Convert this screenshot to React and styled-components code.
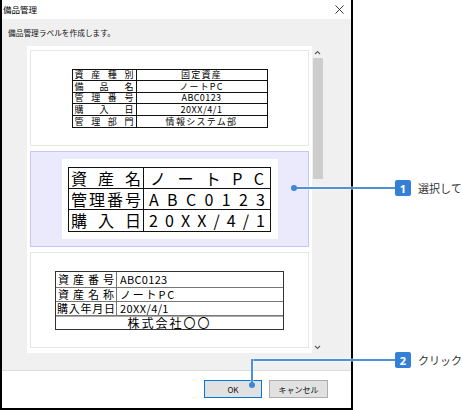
import React from 'react';
import styled, { createGlobalStyle } from 'styled-components';

const GlobalStyle = createGlobalStyle`
  html, body { margin: 0; padding: 0; background: #fff; }
  body { font-family: "Noto Sans CJK JP", "Noto Sans", sans-serif; color: #000; }
  * { box-sizing: border-box; }
`;

const Stage = styled.div`
  position: relative;
  width: 462px;
  height: 410px;
  overflow: hidden;
  background: #fff;
`;

const Window = styled.div`
  width: 353px;
  height: 410px;
  border: 2px solid #000;
  border-top: none;
  display: flex;
  flex-direction: column;
  background: #fff;
`;

const TitleBar = styled.div`
  flex: none;
  height: 19px;
  display: flex;
  align-items: center;
  justify-content: space-between;
  padding: 0 7px 0 1px;
  font-size: 8.5px;
  line-height: 1;
  background: #fff;
`;

const Body = styled.div`
  flex: 1;
  background: #f0f0f0;
  padding: 9px 0 0 25px;
  display: flex;
  flex-direction: column;
`;

const Description = styled.div`
  font-size: 7.7px;
  line-height: 10px;
  height: 10px;
  margin: 0 0 8px -19px;
  color: #111;
`;

const ListRow = styled.div`
  display: flex;
  height: 307px;
`;

const ListArea = styled.div`
  width: 285px;
  background: #fff;
  padding: 4px 3px 5px;
  display: flex;
  flex-direction: column;
  gap: 5px;
`;

const Card = styled.div`
  height: 96px;
  border: 1px solid ${p => (p.$selected ? '#c6c6f4' : '#e6e6e6')};
  background: ${p => (p.$selected ? '#eaeafc' : '#fff')};
  display: flex;
  align-items: center;
  justify-content: center;
`;

const Scrollbar = styled.div`
  width: 11px;
  display: flex;
  flex-direction: column;
  align-items: center;
`;

const ArrowBox = styled.div`
  height: 12px;
  width: 11px;
  display: flex;
  align-items: center;
  justify-content: center;
`;

const Thumb = styled.div`
  width: 10px;
  margin-left: 1px;
  height: 121px;
  background: #cdcdcd;
`;

const Track = styled.div`
  flex: 1;
`;

const Footer = styled.div`
  flex: none;
  height: 38px;
  border-top: 1px solid #dcdcdc;
  background: #fff;
  display: flex;
  justify-content: flex-end;
  align-items: flex-start;
  gap: 7px;
  padding: 9px 23px 0 0;
`;

const Button = styled.div`
  width: ${p => p.$w}px;
  height: 18px;
  background: #e1e1e1;
  border: 1px solid ${p => (p.$default ? '#0078d7' : '#adadad')};
  font-size: 8px;
  display: flex;
  align-items: center;
  justify-content: center;
  color: #111;
`;

/* label tables */
const Grid = styled.div`
  display: grid;
  width: ${p => p.$w}px;
  height: ${p => p.$h}px;
  grid-template-columns: ${p => p.$cols};
  grid-template-rows: ${p => p.$rows};
  gap: 1px;
  background: ${p => p.$line};
  border: ${p => p.$outer};
  font-size: ${p => p.$fs}px;
  line-height: 1;
`;

const Cell = styled.div`
  background: #fff;
  display: flex;
  align-items: center;
  justify-content: ${p => p.$align || 'center'};
  padding: 0 ${p => p.$pad ?? 2}px;
  letter-spacing: ${p => p.$ls || 0}px;
  white-space: nowrap;
  min-height: 0;
  ${p => p.$span && 'grid-column: 1 / span 2;'}
  ${p => p.$topRule && `border-top: 1px solid ${p.$topRule};`}
  ${p => p.$big && `font-size: ${p.$big}px;`}
`;

const Spread = styled.span`
  display: flex;
  width: 100%;
  justify-content: space-between;
  align-items: center;
  line-height: 1;
`;

const Sheet = styled.div`
  width: 216px;
  height: 80px;
  background: #fff;
  display: flex;
  align-items: center;
  justify-content: center;
`;

const spread = chars => (
  <Spread>
    {chars.map((c, i) => (
      <span key={i}>{c}</span>
    ))}
  </Spread>
);

/* callouts */
const Leader = styled.div`
  position: absolute;
  left: ${p => p.$x}px;
  top: ${p => p.$y}px;
  width: ${p => p.$w}px;
  height: ${p => p.$h}px;
  background: #4f91d8;
  box-shadow: 0 0 0 0.5px rgba(255, 255, 255, 0.6);
`;

const Dot = styled.div`
  position: absolute;
  left: ${p => p.$x - 3}px;
  top: ${p => p.$y - 3}px;
  width: 6px;
  height: 6px;
  border-radius: 50%;
  background: #3f87d6;
`;

const Tag = styled.div`
  position: absolute;
  left: 395px;
  top: ${p => p.$cy - 8}px;
  display: flex;
  align-items: center;
  gap: 7px;
`;

const Badge = styled.div`
  width: 16px;
  height: 16px;
  border-radius: 2px;
  background: #3480d6;
  color: #fff;
  font-family: "Noto Sans", sans-serif;
  font-weight: 700;
  font-size: 11px;
  display: flex;
  align-items: center;
  justify-content: center;
`;

const TagText = styled.span`
  font-size: 11px;
  color: #333;
  white-space: nowrap;
`;

const Chevron = ({ up }) => (
  <svg width="7" height="5" viewBox="0 0 7 5">
    <path
      d={up ? 'M1 4 L3.5 1.5 L6 4' : 'M1 1 L3.5 3.5 L6 1'}
      fill="none"
      stroke="#606060"
      strokeWidth="1.2"
    />
  </svg>
);

const CloseIcon = () => (
  <svg width="9" height="9" viewBox="0 0 9 9">
    <path d="M0.5 0.5 L8.5 8.5 M8.5 0.5 L0.5 8.5" stroke="#222" strokeWidth="0.9" />
  </svg>
);

export default function App() {
  return (
    <>
      <GlobalStyle />
      <Stage>
        <Window>
          <TitleBar>
            <span>備品管理</span>
            <CloseIcon />
          </TitleBar>
          <Body>
            <Description>備品管理ラベルを作成します。</Description>
            <ListRow>
              <ListArea>
                <Card>
                  <Grid
                    $w={196}
                    $h={59}
                    $cols="63px 1fr"
                    $rows="repeat(5, 1fr)"
                    $line="#111"
                    $outer="1px solid #111"
                    $fs={9}
                  >
                    <Cell>{spread(['資', '産', '種', '別'])}</Cell>
                    <Cell $ls={1.2}>固定資産</Cell>
                    <Cell>{spread(['備', '品', '名'])}</Cell>
                    <Cell $ls={1.2}>ノートPC</Cell>
                    <Cell>{spread(['管', '理', '番', '号'])}</Cell>
                    <Cell $ls={0.4}>ABC0123</Cell>
                    <Cell>{spread(['購', '入', '日'])}</Cell>
                    <Cell $ls={0.6}>20XX/4/1</Cell>
                    <Cell>{spread(['管', '理', '部', '門'])}</Cell>
                    <Cell $ls={1.3}>情報システム部</Cell>
                  </Grid>
                </Card>
                <Card $selected>
                  <Sheet>
                    <Grid
                      $w={203}
                      $h={65}
                      $cols="74px 1fr"
                      $rows="repeat(3, 1fr)"
                      $line="#111"
                      $outer="1.5px solid #111"
                      $fs={16}
                    >
                      <Cell $pad={2}>{spread(['資', '産', '名'])}</Cell>
                      <Cell $pad={6}>{spread(['ノ', 'ー', 'ト', 'P', 'C'])}</Cell>
                      <Cell $pad={2}>{spread(['管', '理', '番', '号'])}</Cell>
                      <Cell $pad={5}>{spread(['A', 'B', 'C', '0', '1', '2', '3'])}</Cell>
                      <Cell $pad={2}>{spread(['購', '入', '日'])}</Cell>
                      <Cell $pad={5}>{spread(['2', '0', 'X', 'X', '/', '4', '/', '1'])}</Cell>
                    </Grid>
                  </Sheet>
                </Card>
                <Card>
                  <Grid
                    $w={229}
                    $h={59}
                    $cols="60px 1fr"
                    $rows="15px 13px 13px 1fr"
                    $line="#777"
                    $outer="1.5px solid #333"
                    $fs={11}
                  >
                    <Cell>{spread(['資', '産', '番', '号'])}</Cell>
                    <Cell $align="flex-start" $pad={3} $ls={0.3}>ABC0123</Cell>
                    <Cell>{spread(['資', '産', '名', '称'])}</Cell>
                    <Cell $align="flex-start" $pad={3} $ls={1.8}>ノートPC</Cell>
                    <Cell $pad={1}>{spread(['購', '入', '年', '月', '日'])}</Cell>
                    <Cell $align="flex-start" $pad={3} $ls={0.4}>20XX/4/1</Cell>
                    <Cell $span $topRule="#aaa" $big={12} $ls={2}>株式会社〇〇</Cell>
                  </Grid>
                </Card>
              </ListArea>
              <Scrollbar>
                <ArrowBox>
                  <Chevron up />
                </ArrowBox>
                <Thumb />
                <Track />
                <ArrowBox>
                  <Chevron />
                </ArrowBox>
              </Scrollbar>
            </ListRow>
          </Body>
          <Footer>
            <Button $w={58} $default>OK</Button>
            <Button $w={59}>キャンセル</Button>
          </Footer>
        </Window>

        <Leader $x={294} $y={187.25} $w={101} $h={1.5} />
        <Dot $x={294} $y={188} />
        <Tag $cy={188}>
          <Badge>1</Badge>
          <TagText>選択して</TagText>
        </Tag>

        <Leader $x={251.25} $y={359.25} $w={144} $h={1.5} />
        <Leader $x={251.25} $y={359.25} $w={1.5} $h={26} />
        <Dot $x={252} $y={385} />
        <Tag $cy={360}>
          <Badge>2</Badge>
          <TagText>クリック</TagText>
        </Tag>
      </Stage>
    </>
  );
}
